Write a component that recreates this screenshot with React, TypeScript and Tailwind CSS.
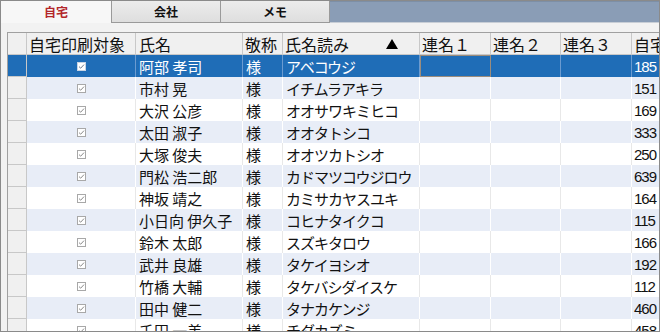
import React from "react";

const rows: [string, string, string, string][] = [
  ["阿部 孝司", "様", "アベコウジ", "185"],
  ["市村 晃", "様", "イチムラアキラ", "151"],
  ["大沢 公彦", "様", "オオサワキミヒコ", "169"],
  ["太田 淑子", "様", "オオタトシコ", "333"],
  ["大塚 俊夫", "様", "オオツカトシオ", "250"],
  ["門松 浩二郎", "様", "カドマツコウジロウ", "639"],
  ["神坂 靖之", "様", "カミサカヤスユキ", "164"],
  ["小日向 伊久子", "様", "コヒナタイクコ", "115"],
  ["鈴木 太郎", "様", "スズキタロウ", "166"],
  ["武井 良雄", "様", "タケイヨシオ", "192"],
  ["竹橋 大輔", "様", "タケバシダイスケ", "112"],
  ["田中 健二", "様", "タナカケンジ", "460"],
  ["千田 一美", "様", "チダカズミ", "458"],
];

const jp = { fontFamily: '"Noto Sans CJK JP", "Noto Sans", sans-serif' };
const num = { fontFamily: '"Liberation Sans", "Noto Sans CJK JP", sans-serif' };

function Check({ sel }: { sel: boolean }) {
  return (
    <svg width="9" height="9" viewBox="0 0 9 9">
      <rect x="0.5" y="0.5" width="8" height="8" fill="#ffffff" stroke={sel ? "#c8d4e4" : "#a8a8a8"} />
      <path d="M2 4.6 L3.7 6.2 L7 2.6" fill="none" stroke={sel ? "#6a7a90" : "#8a8a8a"} strokeWidth="1" />
    </svg>
  );
}

export default function App() {
  return (
    <div className="w-[660px] h-[332px] overflow-hidden border border-[#8a8a8a] bg-[#f2f2f2] flex flex-col" style={jp}>
      <div className="flex h-[22px] shrink-0">
        <div className="w-[110px] shrink-0 flex items-center justify-center bg-[#f7f7f7] text-[12px] font-bold text-[#b3262a]">自宅</div>
        <div className="w-[110px] shrink-0 flex items-center justify-center bg-gradient-to-b from-[#ececec] to-[#dedede] border-l border-r border-b border-[#9a9a9a] text-[12px] font-bold text-[#111]">会社</div>
        <div className="w-[109px] shrink-0 flex items-center justify-center bg-gradient-to-b from-[#ececec] to-[#dedede] border-r border-b border-[#9a9a9a] text-[12px] font-bold text-[#111]">メモ</div>
        <div className="flex-1 bg-[#8a9db6] border-t border-[#7d8fa6] border-b border-b-[#c8ced6]"></div>
      </div>
      <div className="flex-1 pl-[6px] pt-[9px] overflow-hidden">
        <div className="border-l border-t border-[#a0a0a0] bg-white w-[780px]">
          <div className="flex h-[22px] bg-[#f0f0f0] border-b border-[#c8c8c8] text-[16px] text-[#111] leading-none">
            <div className="w-[19px] shrink-0 border-r border-[#c8c8c8]"></div>
            <div className="w-[109px] shrink-0 border-r border-[#c8c8c8] pl-[2px] flex items-center whitespace-nowrap">自宅印刷対象</div>
            <div className="w-[107px] shrink-0 border-r border-[#c8c8c8] pl-[3px] flex items-center">氏名</div>
            <div className="w-[40px] shrink-0 border-r border-[#c8c8c8] pl-[2px] flex items-center">敬称</div>
            <div className="w-[137px] shrink-0 border-r border-[#c8c8c8] pl-[2px] pr-[21px] flex items-center justify-between">
              <span>氏名読み</span>
              <svg width="12" height="10" viewBox="0 0 12 10"><path d="M6 0 L12 10 L0 10 Z" fill="#000" /></svg>
            </div>
            <div className="w-[71px] shrink-0 border-r border-[#c8c8c8] pl-[2px] flex items-center whitespace-nowrap">連名１</div>
            <div className="w-[70px] shrink-0 border-r border-[#c8c8c8] pl-[2px] flex items-center whitespace-nowrap">連名２</div>
            <div className="w-[71px] shrink-0 border-r border-[#c8c8c8] pl-[2px] flex items-center whitespace-nowrap">連名３</div>
            <div className="w-[100px] shrink-0 pl-[2px] flex items-center whitespace-nowrap">自宅郵便番号</div>
          </div>
          {rows.map((r, i) => {
            const sel = i === 0;
            const alt = i % 2 === 1;
            const bg = sel ? "bg-[#1f6db7]" : alt ? "bg-[#e8edf7]" : "bg-white";
            const line = sel ? "border-[#6b9bd0]" : alt ? "border-white" : "border-[#e8e8e8]";
            const txt = sel ? "text-white" : "text-[#111]";
            return (
              <div key={i} className={`flex h-[22px] text-[15px] leading-none ${bg} ${txt}`}>
                <div className={`w-[19px] shrink-0 border-r border-b border-[#c8c8c8] ${sel ? "bg-[#1f6db7]" : "bg-[#f0f0f0]"}`}></div>
                <div className={`w-[109px] shrink-0 border-r ${line} flex items-center justify-center`}>
                  <Check sel={sel} />
                </div>
                <div className={`w-[107px] shrink-0 border-r ${line} pl-[3px] flex items-center whitespace-nowrap`}>{r[0]}</div>
                <div className={`w-[40px] shrink-0 border-r ${line} pl-[3px] flex items-center`}>{r[1]}</div>
                <div className={`w-[137px] shrink-0 border-r ${line} pl-[3px] flex items-center whitespace-nowrap tracking-[-1px]`}>{r[2]}</div>
                <div className={`w-[71px] shrink-0 ${sel ? "border border-[#9b8c7c]" : `border-r ${line}`}`}></div>
                <div className={`w-[70px] shrink-0 border-r ${line}`}></div>
                <div className={`w-[71px] shrink-0 border-r ${line}`}></div>
                <div className="w-[100px] shrink-0 pl-[2px] flex items-center text-[15px] tracking-[-1px]" style={num}>{r[3]}</div>
              </div>
            );
          })}
        </div>
      </div>
    </div>
  );
}
